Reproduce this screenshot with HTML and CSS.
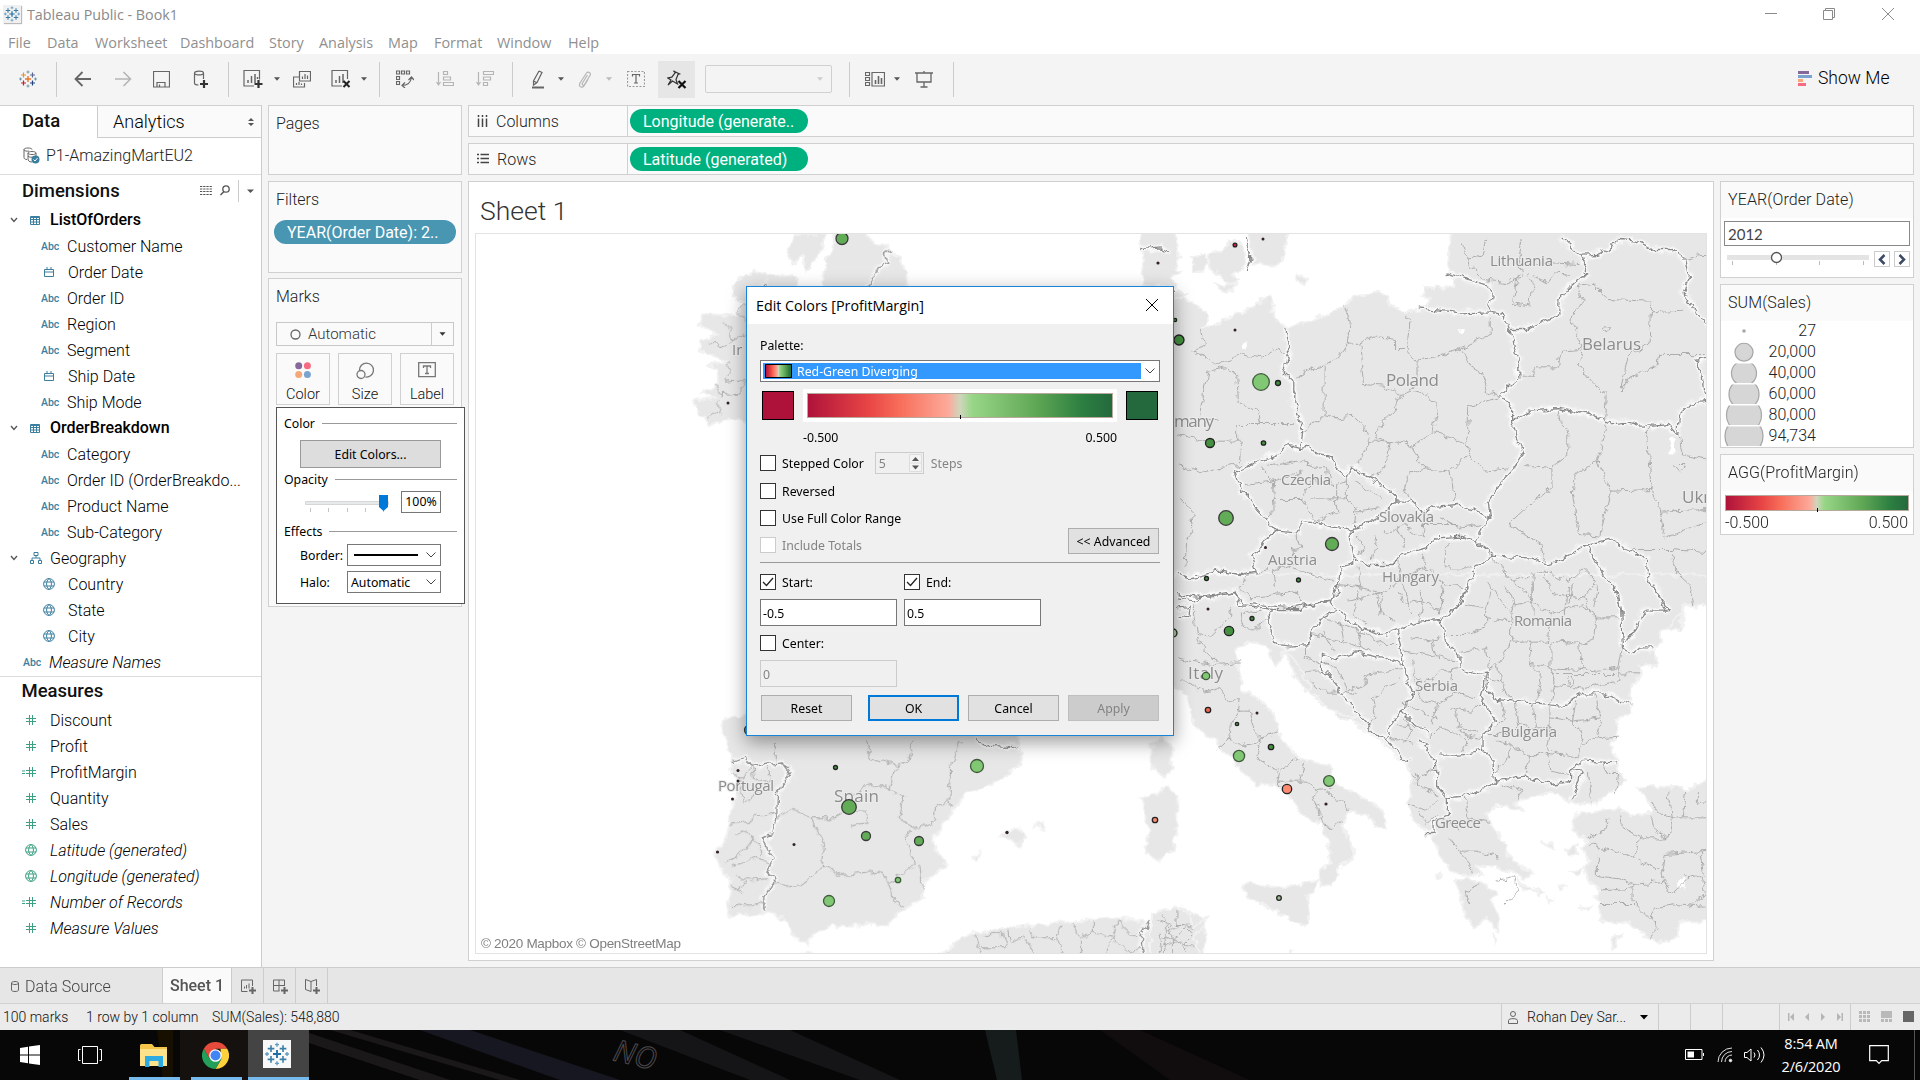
FILE: index.html
```html
<!DOCTYPE html>
<html lang="en">
<head>
<meta charset="utf-8">
<title>Tableau Public - Book1</title>
<link rel="stylesheet" href="styles.css">
</head>
<body>
<svg class="defs" width="0" height="0">
  <defs>
    <symbol id="logo" viewBox="0 0 18 18" fill="none" stroke-width="1.2">
      <path d="M9 6v6M6 9h6" stroke="var(--a)" stroke-width="1.400"/>
      <path d="M4.500 2.500v5M2 5h5" stroke="var(--b)"/><path d="M13.500 2.500v5M11 5h5" stroke="var(--c)"/>
      <path d="M4.500 10.500v5M2 13h5" stroke="var(--d)"/><path d="M13.500 10.500v5M11 13h5" stroke="var(--e)"/>
      <path d="M9 .5v3M7.500 2h3M9 14.500v3M7.500 16h3M1.500 7.500v3M0 9h3M16.500 7.500v3M15 9h3" stroke="var(--f)" stroke-width="1"/>
    </symbol>
    <symbol id="table" viewBox="0 0 10 9"><path d="M.5.5h9v8h-9zM0 1.500h10M.5 3.500h9M.5 6h9M3.500 1v7.500M6.500 1v7.500" fill="none" stroke="#3b7f9f"/></symbol>
    <symbol id="cal" viewBox="0 0 10 10"><path d="M.5 2.500h9v7h-9zM0 5h10M3 0v3M7 0v3" fill="none" stroke="#3b7f9f"/></symbol>
    <symbol id="globe" viewBox="0 0 12 12"><path d="M6 .6a5.400 5.400 0 1 0 0 10.800A5.400 5.400 0 1 0 6 .6M1 4h10M1 8h10M6 .6C2.800 3 2.800 9 6 11.400M6 .6C9.200 3 9.200 9 6 11.400" fill="none" stroke="currentColor"/></symbol>
    <symbol id="hash" viewBox="0 0 10 10"><path d="M3.500 0v10M6.500 0v10M0 3.500h10M0 6.500h10" fill="none" stroke="#3ba182"/></symbol>
    <symbol id="calc" viewBox="0 0 14 10"><path d="M7.500 0v10M10.500 0v10M4 3.500h10M4 6.500h10M0 4h3M0 6.500h3" fill="none" stroke="#3ba182"/></symbol>
    <symbol id="geo" viewBox="0 0 12 12"><path d="M4 .5h4v3H4zM.5 8.500h3v3h-3zM8.500 8.500h3v3h-3zM6 3.500V6M2 8.500V6h8v2.500" fill="none" stroke="#3b7f9f"/></symbol>
    <symbol id="chev" viewBox="0 0 8 6"><path d="M1 1l3 3.500L7 1" fill="none" stroke="#555" stroke-width="1.300"/></symbol>
    <symbol id="car" viewBox="0 0 6 4"><path d="M0 .3h6L3 3.700z" fill="currentColor"/></symbol>
    <linearGradient id="div"><stop offset="0" stop-color="#ae123a"/><stop offset=".2" stop-color="#e84545"/><stop offset=".3" stop-color="#f76d59"/><stop offset=".46" stop-color="#fda999"/><stop offset=".5" stop-color="#cfd6bc"/><stop offset=".54" stop-color="#98d687"/><stop offset=".75" stop-color="#5fa755"/><stop offset=".9" stop-color="#2c7f41"/><stop offset="1" stop-color="#24693d"/></linearGradient>
    <filter id="rough" x="0" y="0" width="100%" height="100%"><feTurbulence type="fractalNoise" baseFrequency=".11" numOctaves="3" seed="4"/><feDisplacementMap in="SourceGraphic" scale="9" xChannelSelector="R" yChannelSelector="G"/></filter>
  </defs>
</svg>

<header class="titlebar">
  <span class="applogo"><svg width="16" height="16"><use href="#logo"/></svg></span>
  <span class="apptitle">Tableau Public - Book1</span>
  <svg class="winbtns" width="140" height="28" fill="none" stroke="#8a8a8a"><path d="M5 13.500h12M63.500 10.500h9v9h-9zM65.500 10V8.500h9v9H73M122 8l12 12M134 8l-12 12"/></svg>
</header>
<nav class="menubar"><span class="m1">File</span><span class="m2">Data</span><span class="m3">Worksheet</span><span class="m4">Dashboard</span><span class="m5">Story</span><span class="m6">Analysis</span><span class="m7">Map</span><span class="m8">Format</span><span class="m9">Window</span><span>Help</span></nav>

<div class="toolbar">
  <span class="tb w56 color"><svg width="18" height="18"><use href="#logo"/></svg></span><i class="sep"></i>
  <span class="tb w40 ml6"><svg width="18" height="16"><path d="M17 8H2M8.500 1L1.500 8l7 7" stroke-width="1.800"/></svg></span>
  <span class="tb w39 dim"><svg width="18" height="16"><path d="M1 8h15M9.500 1l7 7-7 7" stroke-width="1.600"/></svg></span>
  <span class="tb w39"><svg width="17" height="17"><path d="M.5.5h16v15.500H.5zM4 16v-4.500h8V16M6.500 13.500V16"/></svg></span>
  <span class="tb w39"><svg width="16" height="18"><path d="M1.500 3c0-2.500 9-2.500 9 0s-9 2.500-9 0v10c0 1 1.500 2 4 2M10.500 3v6"/><path d="M11 10v8M7 14h8" stroke="#333" stroke-width="2.200"/></svg></span>
  <i class="sep ml8"></i>
  <span class="tb w40 ml4"><svg width="20" height="18"><path d="M16.500 9.500V.5H1v15.500h10"/><path d="M5 13v-3M8.500 13V6M12 13V4M14.500 9V7" stroke-width="1.500"/><path d="M15.500 10v8M11.500 14h8" stroke="#333" stroke-width="2.200"/></svg></span><span class="cr"><svg width="6" height="4"><use href="#car"/></svg></span>
  <span class="tb w41"><svg width="18" height="17"><path d="M6.500.5h11v9.500h-11zM6 6H.5v10h11v-4M9.500 8V5.500M12 8V3M14.500 8V4.500M3.500 14v-2M6 14v-3M8.500 14v-1.500"/></svg></span>
  <span class="tb w38"><svg width="20" height="18"><path d="M16.500 9V.5H1v15.500h10"/><path d="M5 13v-3M8.500 13V6M12 13V4" stroke-width="1.500"/><path d="M12.500 11l6 6M18.500 11l-6 6" stroke="#222" stroke-width="2"/></svg></span><span class="cr"><svg width="6" height="4"><use href="#car"/></svg></span>
  <i class="sep ml11"></i>
  <span class="tb w40 ml5"><svg width="18" height="18"><path d="M.5 1h3v3h-3zM5.500 1h3v3h-3zM10.500 1h3v3h-3zM.5 6.500h3v3h-3zM.5 11.500h3v3h-3zM6 15.500c5 0 8.500-2 9.500-8M9 12.500L6 15.500l3 2.500M12.500 10l3-3 2.500 3"/></svg></span>
  <span class="tb w40 dim"><svg width="18" height="16"><path d="M2.500 1v13M.5 11l2 3 2-3M7.500.5h4v3h-4zM7.500 6h7v3h-7zM7.500 11.500h10v3h-10z"/></svg></span>
  <span class="tb w39 dim"><svg width="18" height="16"><path d="M2.500 1v13M.5 11l2 3 2-3M7.500.5h10v3h-10zM7.500 6h7v3h-7zM7.500 11.500h4v3h-4z"/></svg></span>
  <i class="sep ml8"></i>
  <span class="tb w38 ml6"><svg width="14" height="19"><path d="M8 1l3 1.500-5 10-3.500 2.500v-4L8 1M2.500 11l3 1.500"/><path d="M1 17.500h12" stroke-width="2"/></svg></span><span class="cr"><svg width="6" height="4"><use href="#car"/></svg></span>
  <span class="tb w40 dim"><svg width="14" height="17"><path d="M9.500 4l-5 8c-1 2 1 3 2 1.500l5.500-9C13.500 2 10 0 8.500 2L2 12c-2 4 2 5 4 3l4-6.500"/></svg></span><span class="cr dim"><svg width="6" height="4"><use href="#car"/></svg></span>
  <span class="tb w45"><svg width="18" height="16"><path d="M.5.5h17v15H.5z" stroke-dasharray="2 1.500" stroke="#999"/><path d="M5.500 5.500v-2h7v2M9 3.500V12M7 12h4"/></svg></span>
  <span class="tb pin"><svg width="20" height="19"><path d="M6.500 1l6 3-1.500.5-2 5 1.500 4.500-5-3L1 15l3-5L.8 8l4-.8L8.300 2.500z" stroke="#333"/><path d="M11.500 11l7 7M18.500 11l-7 7" stroke="#111" stroke-width="2.200"/></svg></span>
  <span class="fit"><svg width="6" height="4"><use href="#car"/></svg></span>
  <i class="sep ml17"></i>
  <span class="tb w36 ml7"><svg width="20" height="15"><path d="M.5.5h4v3h-4zM.5 5.500h4v3h-4zM.5 10.500h4v3h-4zM7 .5h12.500v13.500H7z"/><path d="M10.500 12V8M13.500 12V4M16.500 12V6" stroke-width="1.600"/></svg></span><span class="cr"><svg width="6" height="4"><use href="#car"/></svg></span>
  <span class="tb w46"><svg width="18" height="17"><path d="M0 2h18M2 2.500v8.500h14V2.500M9 0v2M9 11v4.500M5.500 16h7" stroke-width="1.300"/></svg></span>
  <i class="sep ml6"></i>
  <span class="showme"><svg width="14" height="15"><path d="M0 0h11v3H0z" fill="#86699b"/><path d="M0 4h14v3H0z" fill="#7ba3cf"/><path d="M0 8h5v3H0z" fill="#f5a77a"/><path d="M0 12h8v3H0z" fill="#f76b82"/></svg>Show Me</span>
</div>

<main class="work">
  <aside class="datapane">
    <div class="tabs"><b>Data</b><span>Analytics<svg width="6" height="8"><path d="M0 3l3-3 3 3zM0 5l3 3 3-3z" fill="#555"/></svg></span></div>
    <div class="source"><svg width="17" height="17" fill="none" stroke="#666"><path d="M1 2.500c0-2 8-2 8 0M1 2.500v8c0 1 1 2 3 2M1 2.500C1 4 4 4.500 6 4M5 6c0-2 8-2 8 0s-8 2-8 0v6c0 1.500 1 3 4 3M13 6v3M5 9c1 1.500 4 1.500 6 1"/><circle cx="12.500" cy="12.500" r="4" fill="#3b7f9f" stroke="none"/><path d="M10.500 12.500l1.500 1.500 2.500-3" stroke="#fff"/></svg>P1-AmazingMartEU2</div>
    <div class="head">Dimensions<svg width="56" height="22"><path d="M0 6.500h12M0 9h12M0 11.500h12M0 14.500h12" stroke="#555" stroke-dasharray="2.300 .9"/><circle cx="26" cy="9" r="3.200" fill="none" stroke="#555" stroke-width="1.300"/><path d="M24 11.500L20.500 15" stroke="#555" stroke-width="1.500"/><path d="M38.500 0v22" stroke="#ccc"/><path d="M47 9.500h7L50.500 13z" fill="#555"/></svg></div>
    <ul class="fields">
      <li class="grp b"><svg class="cv" width="8" height="6"><use href="#chev"/></svg><svg width="10" height="9"><use href="#table"/></svg><span>ListOfOrders</span></li>
      <li><em>Abc</em><span>Customer Name</span></li>
      <li><svg width="10" height="10"><use href="#cal"/></svg><span>Order Date</span></li>
      <li><em>Abc</em><span>Order ID</span></li>
      <li><em>Abc</em><span>Region</span></li>
      <li><em>Abc</em><span>Segment</span></li>
      <li><svg width="10" height="10"><use href="#cal"/></svg><span>Ship Date</span></li>
      <li><em>Abc</em><span>Ship Mode</span></li>
      <li class="grp b"><svg class="cv" width="8" height="6"><use href="#chev"/></svg><svg width="10" height="9"><use href="#table"/></svg><span>OrderBreakdown</span></li>
      <li><em>Abc</em><span>Category</span></li>
      <li><em>Abc</em><span>Order ID (OrderBreakdo...</span></li>
      <li><em>Abc</em><span>Product Name</span></li>
      <li><em>Abc</em><span>Sub-Category</span></li>
      <li class="grp"><svg class="cv" width="8" height="6"><use href="#chev"/></svg><svg width="12" height="12"><use href="#geo"/></svg><span>Geography</span></li>
      <li><svg width="12" height="12"><use href="#globe"/></svg><span>Country</span></li>
      <li><svg width="12" height="12"><use href="#globe"/></svg><span>State</span></li>
      <li><svg width="12" height="12"><use href="#globe"/></svg><span>City</span></li>
      <li class="top it"><em>Abc</em><span>Measure Names</span></li>
    </ul>
    <div class="head measures">Measures</div>
    <ul class="fields green">
      <li class="top"><svg width="10" height="10"><use href="#hash"/></svg><span>Discount</span></li>
      <li class="top"><svg width="10" height="10"><use href="#hash"/></svg><span>Profit</span></li>
      <li class="top"><svg class="eq" width="14" height="10"><use href="#calc"/></svg><span>ProfitMargin</span></li>
      <li class="top"><svg width="10" height="10"><use href="#hash"/></svg><span>Quantity</span></li>
      <li class="top"><svg width="10" height="10"><use href="#hash"/></svg><span>Sales</span></li>
      <li class="top it"><svg width="12" height="12"><use href="#globe"/></svg><span>Latitude (generated)</span></li>
      <li class="top it"><svg width="12" height="12"><use href="#globe"/></svg><span>Longitude (generated)</span></li>
      <li class="top it"><svg class="eq" width="14" height="10"><use href="#calc"/></svg><span>Number of Records</span></li>
      <li class="top it"><svg width="10" height="10"><use href="#hash"/></svg><span>Measure Values</span></li>
    </ul>
  </aside>

  <section class="cards">
    <div class="card pages"><h3>Pages</h3></div>
    <div class="card filters"><h3>Filters</h3><span class="pill blue">YEAR(Order Date): 2..</span></div>
    <div class="card marks"><h3>Marks</h3>
      <div class="marktype"><svg width="11" height="11"><circle cx="5.500" cy="5.500" r="4.500" fill="none" stroke="#666" stroke-width="1.300"/></svg><span>Automatic</span><i><svg width="7" height="4"><use href="#car"/></svg></i></div>
      <div class="markbtns">
        <span><svg width="16" height="16"><circle cx="3.700" cy="3.700" r="3.500" fill="#86699b"/><circle cx="12.400" cy="3.700" r="3.500" fill="#f76b82"/><circle cx="3.700" cy="12.400" r="3.500" fill="#f5a77a"/><circle cx="12.400" cy="12.400" r="3.500" fill="#7ba3cf"/></svg>Color</span>
        <span><svg width="18" height="18" fill="none" stroke="#777" stroke-width="1.300"><path d="M3.500 8.500a7 7 0 1 1 6 6.500"/><circle cx="5" cy="12.500" r="4"/></svg>Size</span>
        <span><svg width="18" height="16" fill="none" stroke="#777" stroke-width="1.300"><path d="M.7.7h16.600v14H.7zM5.500 6V4h7v2M9 4v7.500M7 11.500h4"/></svg>Label</span>
      </div>
      <div class="popup">
        <div class="grptitle">Color<hr></div>
        <button class="editcolors">Edit Colors...</button>
        <div class="grptitle op">Opacity<hr></div>
        <div class="oprow"><svg width="86" height="22"><path d="M.5 6.500h83v3H.5z" fill="#e7eaea" stroke="#d6d6d6"/><path d="M5.500 13v4M23.500 13v4M42.500 13v4M60.500 13v4M78.500 13v4" stroke="#c4c4c4"/><path d="M74 0h9v12l-4.500 4L74 12z" fill="#0078d7"/></svg><span class="pct">100%</span></div>
        <div class="grptitle ef">Effects<hr></div>
        <div class="effrow"><label>Border:</label><span class="combo"><b></b><svg width="10" height="6"><path d="M.5.5L5 5l4.500-4.500" fill="none" stroke="#444"/></svg></span></div>
        <div class="effrow"><label>Halo:</label><span class="combo">Automatic<svg width="10" height="6"><path d="M.5.5L5 5l4.500-4.500" fill="none" stroke="#444"/></svg></span></div>
      </div>
    </div>
  </section>

  <section class="stage">
    <div class="shelf"><span class="sl"><svg width="11" height="13"><path d="M1.500 0v2M5.500 0v2M9.500 0v2M1.500 3.500V12M5.500 3.500V12M9.500 3.500V12" stroke="#444" stroke-width="1.500"/></svg>Columns</span><span class="pill">Longitude (generate..</span></div>
    <div class="shelf"><span class="sl"><svg width="12" height="12"><path d="M0 1.500h2M3.500 1.500H12M0 5.500h2M3.500 5.500H12M0 9.500h2M3.500 9.500H12" stroke="#444" stroke-width="1.500"/></svg>Rows</span><span class="pill">Latitude (generated)</span></div>
    <div class="lower">
      <div class="view">
        <h1>Sheet 1</h1>
        <svg class="map" width="1232" height="721" viewBox="475 233 1232 721">
          <rect x="475" y="233" width="1232" height="721" fill="#fff"/>
          <g filter="url(#rough)">
            <g class="land">
              <g transform="translate(474.500 234.500) scale(.4591 .33333)">
                <path d="M785 -20L775 60 760 100 755 140 780 190H945L940 120 925 70 905 40 860 15 840 -20ZM700 0L765 0 745 80 722 110 715 60 695 90 680 55ZM565 150L605 110 650 125 700 125 705 190 600 200V565L555 555 510 575 500 550 475 515 475 500 525 490 495 475 530 450 530 400 510 390 545 380 490 350 495 320 530 300 485 270 500 240 545 245 575 240 590 200 560 190Z"/>
              </g>
              <g transform="translate(474.500 604.500) scale(.4591 .33333)">
                <path d="M600 300L590 330 540 345 535 370 545 400 560 450 555 500 575 530 565 600 550 690 525 750 540 800 560 820 550 935 590 930 610 930 640 920 680 950 690 990 725 1022 740 985 780 965 900 960 930 920 980 880 975 840 1010 800 1028 775 1005 740 1000 700 1045 610 1070 570 1130 535 1185 490 1190 440 1180 380Z"/>
                <path d="M1500 400L1520 430 1518 490 1500 525 1475 480 1470 430 1490 405ZM1505 545L1530 580 1530 660 1520 740 1490 765 1460 745 1470 680 1450 580 1490 570ZM1145 695L1180 670 1200 690 1185 725ZM1085 760L1102 745 1095 768ZM1218 660L1238 658 1243 675ZM970 1070L1020 1045 1080 985 1200 965 1290 950 1380 940 1440 945 1470 960 1500 915 1540 910 1590 940V1070ZM705 1070L715 1045 735 1045 738 1070Z"/>
              </g>
              <g transform="translate(1154.500 234.500) scale(.35714 .33333)">
                <path d="M66 185L95 200 120 215 140 230 150 245 135 275 165 275 200 255 240 235 270 222 300 195 325 185 335 210 325 235 345 262 375 280 440 255 500 235 530 210 570 180 620 175 648 178 660 215 700 232 740 225 750 215 775 195 750 185 752 158 835 163 838 115 825 110 830 -20H1590V1110L1480 1118 1475 1190H40V185Z"/>
                <path d="M-39 -20L55 -20 70 60 60 90 75 110 50 130 60 165 90 180 40 200 -30 200ZM105 70L140 60 150 85 135 115 110 110ZM150 60L190 50 215 15 240 35 255 60 255 90 220 120 240 140 205 150 180 120 155 100ZM175 150L230 150 215 172 190 170ZM265 -20L270 50 268 90 310 90 345 95 365 60 370 -20ZM400 120L425 128 420 150 400 140Z"/>
              </g>
              <g transform="translate(1154.500 584.500) scale(.35714 .33333)">
                <path d="M40 -30H1590V60L1480 62 1475 90 1440 130 1410 150 1420 165 1400 190 1405 245 1355 240 1365 270 1335 310 1335 385 1290 405 1300 440 1275 480 1300 530 1300 565 1320 585 1300 605 1270 625 1225 665 1195 655 1160 655 1130 630 1095 625 1050 640 1010 655 1035 680 1000 670 960 665 930 690 950 730 975 770 990 810 1030 850 1060 870 1040 885 1015 870 960 850 900 845 920 870 880 875 830 860 800 810 780 760 735 720 710 655 720 600 715 560 700 530 650 490 600 440 540 400 490 375 440 330 410 290 380 230 360 200 340 250 320 200 290 170 240 185 225 200 240 290 245 320 290 340 330 380 350 450 400 520 490 545 500 590 570 630 640 680 650 735 620 725 600 690 545 680 525 730 550 780 560 815 520 845 495 905 465 910 465 860 495 830 470 720 410 690 390 650 340 600 290 600 250 570 190 490 140 450 115 430 100 370 80 320 40 300Z"/>
                <path d="M1590 570V1010H1470L1465 1060 1410 1072 1375 1055 1330 1020 1260 1010 1240 985 1250 955 1235 940 1250 920 1215 890 1200 850 1220 830 1200 790 1215 770 1170 740 1180 690 1250 680 1300 670 1330 690 1390 685 1380 640 1350 605 1400 605 1500 615 1540 590ZM840 890L870 880 920 895 960 930 940 945 965 1000 960 1040 930 1000 895 1030 865 990 860 930ZM250 905L270 895 310 910 400 900 460 885 430 940 435 990 420 1025 370 1000 310 965 255 935ZM-10 985L60 970 100 990 105 1030 150 995 130 1035 110 1060 140 1130H-10Z"/>
                <path d="M1085 775L1115 780 1112 795ZM1155 790L1185 785 1180 815 1160 810ZM1165 860L1195 850 1190 870ZM1070 910L1090 930 1075 932ZM1100 940L1115 945 1105 955ZM1280 1060L1308 1050 1285 1095ZM950 1050L958 1060 953 1072ZM795 860L805 880 795 885ZM1130 905L1150 900 1140 915ZM1010 880L1070 920 1040 915ZM1190 970L1225 965 1210 978ZM370 1092L385 1098 380 1104ZM365 195L400 240 440 310 425 320 385 260ZM490 375L560 400 540 412Z"/>
              </g>
            </g>
            <g class="lakes"><ellipse cx="1461" cy="332" rx="3" ry="2"/><ellipse cx="1244" cy="346" rx="3" ry="3"/><ellipse cx="1672" cy="446" rx="3" ry="9"/><ellipse cx="1681" cy="883" rx="4" ry="6"/></g>
            <g class="halo">
              <g transform="translate(474.500 234.500) scale(.4591 .33333)"><path d="M910 45L895 60 900 90 880 100 870 130 855 155M625 170L635 145"/></g>
              <g transform="translate(474.500 604.500) scale(.4591 .33333)"><path d="M560 475L590 460 600 485 670 475 690 510 660 560 658 640 650 690 625 700 650 760 635 800 655 830 630 880 630 915M1090 405L1120 425 1185 430M1470 950L1450 1000 1460 1070"/></g>
              <g transform="translate(1154.500 234.500) scale(.35714 .33333)"><path d="M820 115L865 130 910 145 940 155 945 185 935 225M740 220L860 235 940 232 975 240 995 285 1020 385 1020 430 970 480 1000 520 1000 570 1030 660 1000 710 960 760 935 800 940 850M1140 10L1195 60 1210 115 1165 155 1135 195 1135 240 1080 265 1040 285 995 285M1195 62L1240 60 1270 45 1300 15 1350 20 1400 45 1450 45 1485 75 1495 130 1480 175 1520 240 1557 270M1000 560L1050 530 1130 522 1220 540 1280 565 1320 560 1360 575 1400 575 1440 570 1465 600 1470 540 1500 505 1557 500M1545 500L1535 420 1515 380 1557 370M365 285L378 350 360 410 390 440 390 500 400 540 415 590 410 640M225 710L290 680 350 655 375 630 410 640 430 635 460 660 500 670 510 700 540 725 550 695 600 730 660 770 680 800 625 850 580 875 540 885 500 878 470 870 415 860 400 895 340 890 300 840 245 770 225 710M680 800L720 800 750 830 790 815 850 810 900 830 940 850 925 870 900 920 860 905 790 910 760 940 690 960 670 990 600 990 555 960 545 900 555 880M900 920L950 965 1050 970 1095 990 1150 970 1210 930 1270 915 1340 950 1380 980 1385 1040 1420 1090 1440 1130M1210 930L1250 1010 1300 1080 1310 1140M950 965L900 1000 870 1070 830 1140M340 890L310 910 300 940 270 960 285 1010 240 1020 180 1010 100 1030 66 1020M555 960L555 990 520 1000 515 1050 490 1100 450 1110 380 1120 250 1105 225 1075 140 1090 66 1080M258 10L270 70 260 110M-40 45L20 40 40 55M-40 160L60 168"/></g>
              <g transform="translate(1154.500 584.500) scale(.35714 .33333)"><path d="M66 40L110 50 150 35 225 20 240 60 330 75 410 75 440 60 490 50 520 20 515 0M66 70L100 65 95 100 66 95M330 75L315 100 340 180 380 185 435 180 440 150 465 105 510 80 490 50M510 80L580 130 640 150 680 135 740 110 800 105 855 60 880 0M680 135L690 190 700 240 650 220 560 205 510 225 470 210 470 250 520 320 570 390 610 440 650 470M800 108L815 170 855 210 855 250 900 270 935 265 930 310 955 345 1060 355 1140 365 1200 325 1260 325 1300 350 1335 358M700 240L710 300 725 330 690 380 740 430 770 450M930 265L915 340 955 410 920 450 920 500 950 530 955 590 940 605 870 635 820 640 790 600 790 540 760 480 735 470M690 380L655 430 650 470 710 530M820 640L820 690 780 710 780 750 755 750M955 590L1040 575 1110 600 1165 590 1165 555 1200 560 1180 620 1165 650M1165 555L1200 530 1295 535M795 515L840 515 920 500M1280 0L1305 60 1310 190 1340 205 1360 190 1400 190M1400 0L1430 80 1370 80 1350 130 1315 180"/></g>
            </g>
            <g class="reg">
              <g transform="translate(474.500 234.500) scale(.4591 .33333)"><path d="M540 260L555 280 560 315 600 300M510 325L550 335 565 315M550 385L560 410 545 440 590 435M525 450L535 480 580 475 590 440M530 500L535 530 505 550M600 190L575 230 600 265"/></g>
              <g transform="translate(474.500 604.500) scale(.4591 .33333)"><path d="M555 510L590 515 605 480M605 485L610 520 640 530 640 490M655 475L655 410M580 520L585 600 620 560M555 660L600 650 610 630 655 630M570 690L590 680 610 700 580 750 545 770M600 690L620 720 625 760M560 790L600 760 640 775M570 810L600 830 635 820M560 850L580 860 590 830M560 900L600 905 630 890M660 640L690 615 735 640 760 720 755 790 720 830 700 850 655 835M735 640L785 640 815 600 830 560 865 540 905 555 935 580 925 640 970 675 1000 650 1005 600 1030 590 1045 605M905 555L920 480 860 460 855 410M920 480L945 470 955 410M1060 410L1040 480 1035 590M785 640L810 620 850 620 855 655 820 665M755 785L800 810 885 800 900 840 960 780 940 700 950 680M900 840L915 890 935 905M970 780L975 850M1090 990L1105 1050M1110 990L1150 990 1160 1030 1105 1030M1160 970L1165 1010 1200 1000 1220 1050M1210 970L1220 1000 1270 1000 1280 960M1270 1000L1280 1050M1300 950L1320 1000 1350 980 1350 945M1320 1000L1320 1060M1350 980L1390 1000 1400 950M1390 1000L1370 1060M1400 950L1430 990 1450 1000M1390 1000L1420 1040 1460 1030M1030 1040L1060 1060M1500 930L1510 980 1540 960 1568 970M1510 980L1500 1060M1500 1020L1540 1010 1568 1030"/></g>
              <g transform="translate(1154.500 234.500) scale(.35714 .33333)"><path d="M530 210L545 260 540 330 575 325 620 305 675 315 675 345 705 345 735 380 735 430 715 470 690 480 640 455 585 450 575 330M705 240L715 270 705 340M735 380L790 370 860 340 940 300 940 250M865 345L880 390 910 410 930 470 970 485M540 330L515 370 480 390 440 400 400 430M475 395L475 540 510 550 560 545 590 580 600 620 565 690M475 540L450 565 415 590M690 480L670 530 640 560 625 610 660 620 720 635 780 595 785 570 795 520 770 480 715 470M785 595L870 625M970 485L880 520 875 630 880 660 925 710 985 700M600 615L660 620 650 700 600 730M725 635L740 680 760 700 830 710 880 660M830 710L840 800M760 700L710 720 700 760 720 800M860 25L880 70 920 65 930 10M880 70L885 95 920 135 990 145 1030 130 1020 70 1030 10M1020 120L1005 205 1050 215 1060 150 1050 120M1070 90L1110 85 1190 90M1165 120L1120 115 1100 145 1060 120M1180 155L1230 150 1270 195 1390 200 1385 320 1325 370 1305 470M1180 155L1200 200 1165 250 1185 300 1200 345 1140 350 1130 400 1065 400 1060 425 1025 425M1390 235L1480 230M1305 470L1330 430 1410 390 1415 360 1535 360M1200 350L1185 390 1240 460 1265 480 1260 560M1480 75L1530 60 1557 60M150 410L200 400 230 420 235 500 290 530 300 570 390 570M150 410L130 515 125 550 180 560M180 390L240 360 300 370 340 340 370 360M110 350L180 390M130 280L140 330 110 350M230 620L230 570 300 570M66 600L150 620 240 620 235 680M66 690L130 715 180 700 240 690M70 790L100 820 110 880 90 920 85 1000M320 695L400 680 480 700 490 745M250 750L330 740 335 830 310 860M300 700L330 740 420 710M335 795L410 795 440 740 500 750M410 795L450 860 510 830 510 750 540 740M440 790L540 790M540 725L540 800 565 820 560 870M565 740L600 770 640 790M565 830L630 820M400 900L410 940 385 945 390 990 330 1010 340 1060M320 1005L260 1020 240 1060 270 1090 400 1070 415 1110M390 1000L500 1040M570 900L590 950 570 960M620 900L610 980M640 900L700 870 750 910 760 850M750 870L850 870M800 850L860 880 920 870M680 870L700 930M1030 690L1110 700 1160 660 1160 600 1135 560 1130 520M1110 700L1110 760 1060 800 990 870M1240 680L1270 570M1240 680L1175 720 1170 780 1190 900 1250 905 1255 870 1280 770 1240 680M1380 580L1390 760 1410 820 1430 910 1557 860M1280 770L1390 765M1410 830L1557 825M1465 600L1480 660 1557 680M1460 690L1485 690 1470 715 1450 690M1340 945L1450 945 1557 955M1450 960L1460 1010 1500 1050 1510 1110M990 870L1080 930 1095 985M950 970L1000 1040 1060 1090M1000 1040L1090 1010 1160 1040 1200 1000M1060 1010L1060 1140M930 1040L1000 1140M1090 1010L1110 1080 1200 1090M1200 1000L1240 1040 1200 1090 1220 1140M1160 1060L1150 1140M570 1000L580 1060 520 1050M680 970L690 1030 640 1080 570 1060M690 1030L760 1000 750 960M760 1000L810 1050 870 1060M690 1030L720 1140M810 1050L800 1140M820 920L810 1000 890 1000M640 1080L630 1140M540 1100L640 1080M1255 280L1278 280 1270 296 1255 290Z"/></g>
              <g transform="translate(1154.500 584.500) scale(.35714 .33333)"><path d="M110 60L120 150 160 155 210 100 215 60M120 155L140 200 175 230M66 220L100 230 165 240 240 235M66 280L140 320 180 310 200 350 240 340M240 90L250 130 290 130 310 100M250 90L300 80M240 340L235 380 265 380 280 440 300 460 260 485 210 470 215 420 240 380M210 460L180 490M300 460L345 445M300 465L285 520 350 560 345 590 425 590 455 615 500 610M350 555L400 520M420 535L410 590M345 590L355 610M455 615L445 640 470 720 500 730 510 710 530 710M485 620L510 650 530 650 540 680M470 100L560 130 640 180 680 180M440 150L530 170 600 200M470 140L500 200M520 110L530 170M580 130L570 195M420 180L420 220 470 240M440 290L470 320 520 320M420 260L470 260M470 230L520 260 540 320 590 300 590 270 650 260 690 245M690 280L610 340 620 400 600 430M520 320L560 330M570 20L560 100 600 120M620 30L640 90 680 110M680 20L700 60 750 50 740 110M750 20L750 50 800 80M810 20L800 70M720 160L780 170 790 230M700 200L760 210 850 230M720 220L725 280 780 290 800 260 855 250M780 170L800 160M730 290L750 350 790 360 840 330 830 260M790 360L780 420M840 330L900 340M830 370L890 380 920 350M840 370L850 430 900 440M690 350L740 380 790 400M680 420L760 430M700 390L720 440 700 480M660 460L720 480M855 420L870 450 920 460M770 455L795 430 840 440 875 475 860 500M880 460L860 440M870 60L930 70 940 20M930 70L930 130 870 150 820 150M930 100L1000 110 1010 60 980 0M1000 110L1000 170 1100 170 1110 90 1060 50 1010 60M860 200L930 190 935 255 960 230M1000 170L960 240 970 290 1000 350M1060 170L1050 240 1080 270 1070 350M1050 240L1110 250 1110 170M1110 250L1200 255 1190 180 1110 170M1190 180L1230 170 1240 100 1190 60 1110 90M1240 100L1300 100M1200 255L1240 260 1300 250 1310 190M1110 250L1120 300 1110 360M1120 300L1200 310 1300 290 1300 250M1110 270L1200 270 1290 270M1300 265L1360 265M1160 60L1170 0M1230 70L1240 0M1060 50L1060 0M970 290L920 280M1150 290L1165 280 1178 290 1165 303ZM970 350L980 400 950 430M1010 350L1020 420 990 450 930 450M1060 360L1070 430 1020 420M1110 365L1110 430 1070 430M1180 350L1170 410 1110 400M1230 330L1250 400 1170 410M1110 430L1100 500 1050 520 1000 480M1170 410L1200 460 1180 520 1100 500M1250 400L1240 460 1300 455M1240 460L1200 480M1050 520L1040 575M960 470L1000 480 980 540 955 560M1100 500L1110 560 1160 570M1260 530L1270 570 1300 570M1215 560L1225 660M1300 570L1290 625M970 600L1030 620 1020 650M870 640L880 700 940 710M825 700L850 740M800 640L740 600 720 570M740 600L730 560M790 560L740 570M710 655L760 680 790 650M740 680L760 720 790 690M830 760L850 800 900 800 960 815M850 800L885 840 890 870M880 960L870 920 910 900M960 890L1000 880 1020 920 980 960M1220 780L1250 790 1300 800 1340 820 1360 760 1440 760 1450 700M1240 820L1240 870 1300 880 1340 900 1340 950 1390 1005 1400 970 1460 960 1557 970M1340 820L1420 860 1430 890 1340 900M1420 860L1430 810 1557 800M1250 920L1340 910M1250 960L1340 960M1305 690L1310 730 1360 760M1390 690L1400 740 1440 760M1390 660L1450 700 1557 700M1440 620L1450 700M1490 620L1480 700M1520 620L1520 660 1557 650M1430 890L1450 930 1500 880 1530 870 1540 930 1500 970M1500 880L1480 870M1390 1005L1410 1030 1380 1060M1210 760L1260 740 1270 700M1530 800L1540 870M10 1010L40 1020 50 1060 20 1060M60 980L60 1020 90 1020M50 1060L90 1030 110 1050 80 1080 50 1060 50 1120M80 1080L95 1120M10 1050L20 1120"/></g>
            </g>
          </g>
          <g class="names">
            <text x="1490" y="266" textLength="63">Lithuania</text><text class="lg" x="1582" y="350" textLength="59">Belarus</text><text class="lg" x="1386" y="386" textLength="53">Poland</text>
            <text x="1281" y="485" textLength="50">Czechia</text><text x="1379" y="522" textLength="55">Slovakia</text><text x="1268" y="565" textLength="49">Austria</text><text x="1382" y="582" textLength="57">Hungary</text><text class="lg" x="1682" y="503">Ukr</text>
            <text class="lg" x="1174" y="427" textLength="40">many</text><text x="732" y="355">Ir</text><text class="lg" x="1188" y="679" textLength="35">Italy</text>
            <text x="1514" y="626" textLength="58">Romania</text><text x="1415" y="691" textLength="43">Serbia</text><text x="1501" y="737" textLength="56">Bulgaria</text><text x="1435" y="828" textLength="46">Greece</text>
            <text x="718" y="791" textLength="56">Portugal</text><text class="lg" x="834" y="802" textLength="45">Spain</text>
          </g>
          <g class="marksg" stroke="#222">
            <g fill="#62ab57" stroke="#3a3a3a"><circle cx="842" cy="238.500" r="6"/><circle cx="1226" cy="518" r="7.300"/><circle cx="1332" cy="544" r="6.500"/><circle cx="849" cy="807" r="7.300"/><circle cx="866" cy="836" r="4.500"/><circle cx="919" cy="841" r="4.500"/><circle cx="749" cy="730" r="4.500"/></g>
            <g fill="#80c873" stroke="#3f5a3b"><circle cx="1261" cy="382" r="8.300"/><circle cx="977" cy="766" r="6.500"/><circle cx="829" cy="901" r="5.500"/><circle cx="898" cy="880" r="2.700"/><circle cx="1206" cy="676" r="3.700"/><circle cx="1239" cy="756" r="5.600"/><circle cx="1329" cy="781" r="5.400"/></g>
            <g fill="#43903f"><circle cx="1179" cy="340" r="5"/><circle cx="1175" cy="320" r="1.700"/><circle cx="1278" cy="383" r="2.500"/><circle cx="1210" cy="443" r="4.500"/><circle cx="1263.500" cy="443" r="2.200"/><circle cx="1229" cy="631" r="4.700"/><circle cx="1252" cy="618.500" r="2"/><circle cx="1206.500" cy="578.500" r="2"/><circle cx="1298.500" cy="580" r="2"/><circle cx="835.500" cy="767.500" r="2"/><circle cx="1271" cy="747" r="2.700"/><circle cx="1237" cy="724" r="1.700"/><circle cx="1279" cy="898" r="2.300" fill="#9cbd90"/><circle cx="1173" cy="633" r="4" fill="#aac9a0"/></g>
            <g fill="#fb8a70"><circle cx="1287" cy="789" r="4.700"/><circle cx="1155" cy="820" r="2.700"/><circle cx="1208" cy="710" r="2.700" fill="#f2654f"/><circle cx="1235" cy="245" r="1.900" fill="#c21f3c"/></g>
            <g fill="#302226" stroke="none"><circle cx="1158" cy="263" r="1.600"/><circle cx="1263" cy="239" r="1.500"/><circle cx="1235" cy="330" r="1.500"/><circle cx="728" cy="403" r="1.500"/><circle cx="738" cy="770.500" r="1.500"/><circle cx="738" cy="781" r="1.500"/><circle cx="732.500" cy="799" r="1.500"/><circle cx="717.500" cy="852" r="1.600"/><circle cx="794" cy="844.500" r="1.500"/><circle cx="1007" cy="832.500" r="1.700"/><circle cx="1265.500" cy="547.500" r="1.500"/><circle cx="1208" cy="609" r="1.500"/><circle cx="1257" cy="713" r="1.500"/><circle cx="1326" cy="804" r="1.600"/></g>
          </g>
          <text class="attr" x="481" y="948" textLength="200">© 2020 Mapbox © OpenStreetMap</text>
        </svg>
      </div>
      <div class="legends">
        <div class="leg l1"><h3>YEAR(Order Date)</h3><div class="yr">2012</div>
          <div class="slide"><svg width="142" height="16"><path d="M0 4h142v5H0z" fill="#e4e4e4"/><path d="M5.500 10v4M49.500 10v4M92.500 10v4M136.500 10v4" stroke="#bbb"/><circle cx="49.500" cy="6.500" r="5" fill="#fff" stroke="#555" stroke-width="1.300"/></svg><i><svg width="8" height="11"><path d="M6.500 1L2 5.500l4.500 4.500"/></svg></i><i><svg width="8" height="11"><path d="M1.500 1L6 5.500 1.500 10"/></svg></i></div></div>
        <div class="leg l2"><h3>SUM(Sales)</h3>
          <svg class="bubbles" width="40" height="126" fill="#d6d6d6" stroke="#a9a9a9">
            <circle cx="20" cy="10" r="1.800" fill="#a9a9a9" stroke="none"/>
            <svg y="21.500" width="40" height="19.500"><circle cx="20" cy="9.700" r="9"/></svg>
            <svg y="42.500" width="40" height="19.500"><circle cx="20" cy="9.700" r="12.500"/></svg>
            <svg y="63.500" width="40" height="19.500"><circle cx="20" cy="9.700" r="15"/></svg>
            <svg y="84.500" width="40" height="19.500"><circle cx="20" cy="9.700" r="17.500"/></svg>
            <svg y="105.500" width="40" height="19.500"><circle cx="20" cy="9.700" r="19"/></svg>
          </svg>
          <div class="nums"><span>27</span><span>20,000</span><span>40,000</span><span>60,000</span><span>80,000</span><span>94,734</span></div></div>
        <div class="leg l3"><h3>AGG(ProfitMargin)</h3><svg class="grad" width="184" height="17"><rect x=".5" y=".5" width="183" height="15" fill="url(#div)" stroke="#b9a99c"/><path d="M92.500 13v4" stroke="#000"/></svg><div class="ends"><span>-0.500</span><span>0.500</span></div></div>
      </div>
    </div>
  </section>
</main>

<div class="sheettabs"><span class="ds"><svg width="8" height="11" fill="none" stroke="#666"><path d="M.5 2c0-2 7-2 7 0s-7 2-7 0v7c0 2 7 2 7 0V2"/></svg>Data Source</span><b>Sheet 1</b>
  <span class="nt"><svg width="16" height="16"><path d="M11.500 7V1H.5v11.500h6M3.500 9.500v-2M5.500 9.500V6M8 9.500V4.500"/><path d="M11.500 8v7M8 11.500h7" stroke-width="2"/></svg></span>
  <span class="nt"><svg width="16" height="16"><path d="M11.500 7V1H.5v11h6M6 1v11M.5 6.500h11"/><path d="M11.500 8v7M8 11.500h7" stroke-width="2"/></svg></span>
  <span class="nt"><svg width="16" height="16"><path d="M6 2.500L.5.5v10L6 12.500zM6 2.500L11.500.5V7"/><path d="M11.500 8v7M8 11.500h7" stroke-width="2"/></svg></span></div>
<footer class="status"><span class="s1">100 marks</span><span class="s2">1 row by 1 column</span><span>SUM(Sales): 548,880</span>
  <div class="user"><svg width="10" height="13" fill="none" stroke="#666"><circle cx="5" cy="3" r="2.500"/><path d="M.5 12.500V9.500C.5 7 9.500 7 9.500 9.500v3z"/></svg>Rohan Dey Sar...<svg class="uc" width="8" height="5"><path d="M0 0h8L4 4.500z"/></svg></div>
  <i class="c32"></i><i class="c32"></i><i class="c57"></i>
  <div class="nav"><svg width="55" height="8" fill="#b5b5b5"><path d="M0 0h1.500v8H0zM6 0v8L2 4zM21 0v8l-4-4zM33 0l4 4-4 4zM49 0l4 4-4 4zM53.500 0H55v8h-1.500z"/></svg></div>
  <div class="views"><svg width="56" height="12" fill="#b9b9b9"><path d="M0 0h3v3H0zM4 0h3v3H4zM8 0h3v3H8zM0 4h3v3H0zM4 4h3v3H4zM8 4h3v3H8zM0 8h3v3H0zM4 8h3v3H4zM8 8h3v3H8zM22 0h11v7H22zM22 8h3v3h-3zM26 8h3v3h-3zM30 8h3v3h-3z"/><path d="M44 0h11v11H44z" fill="#666"/></svg></div>
</footer>

<div class="taskbar">
  <svg class="wall" width="1920" height="50"><path d="M420 0L560 50H620L470 0z" fill="#171722"/><path d="M620 0L750 50H790L680 0zM720 0L860 50H900L790 0z" fill="#151517"/><path d="M270 0L420 50H450L300 0zM330 0L500 50H520L350 0z" fill="#1b1819"/><path d="M985 0l12 50h25l-6-50z" fill="#161b1c"/><path d="M1100 0l70 50h80L1140 0z" fill="#110c0d"/><path d="M157 0h16v50h-10z" fill="#171000"/><path d="M180 0h68v50h-68z" fill="#15110f"/><text x="612" y="30" transform="rotate(14 612 30)">NO</text></svg>
  <span class="t win"><svg width="20" height="20" fill="#fff"><path d="M0 3l8-1.200V9.500H0zM9 1.600L20 0v9.500H9zM0 10.500h8v7.700L0 17zM9 10.500h11V20L9 18.400z"/></svg></span>
  <span class="t tv"><svg width="24" height="18" fill="none" stroke="#fff"><path d="M4.500.5h15v17h-15zM2.500 3.500h-2v11h2M21.500 3.500h2v11h-2"/></svg></span>
  <span class="t open ex"><svg width="27" height="23"><path d="M0 1.500Q0 0 1.500 0H12l2.500 3H27v18H0z" fill="#f5c54a"/><path d="M0 5h27v17H0z" fill="#fde28c"/><path d="M5 12h18v11h-4.500v-6h-9v6H5z" fill="#2cabe2"/></svg></span>
  <span class="t open ch"><svg width="27" height="27" viewBox="-13.500 -13.500 27 27"><path d="M-11.700-6.750A13.500 13.500 0 0 1 11.700-6.750H0L-5.800 3.400z" fill="#e64a3b"/><path d="M11.700-6.750A13.500 13.500 0 0 1 0 13.500L5.800 3.400 5-6.750z" fill="#fdd13c"/><path d="M0 13.500A13.500 13.500 0 0 1-11.700-6.750L-5.800 3.400 5.800 3.400z" fill="#22a05a"/><circle r="6.300" fill="#fff"/><circle r="5" fill="#4285f4"/></svg></span>
  <span class="t open tab"><i><svg width="24" height="24"><use href="#logo"/></svg></i></span>
  <div class="tray">
    <svg class="bat" width="20" height="12"><path d="M.5.5h16.500v10H.5zM18.500 4v3" fill="none" stroke="#fff"/><path d="M2.500 2.500H9v6H2.500z" fill="#fff"/></svg>
    <svg class="wifi" width="16" height="16" fill="none" stroke="#ddd"><path d="M1 15A14 14 0 0 1 15 1M4.500 15A10.500 10.500 0 0 1 15 4.500M8 15a7 7 0 0 1 7-7"/><circle cx="13.500" cy="13.500" r="1.300" fill="#fff"/></svg>
    <svg class="vol" width="21" height="18" fill="none" stroke="#fff"><path d="M.5 6.500h2.500L7 3v12l-4-3.500H.5zM10 6.500q2 2.500 0 5M13.500 4q4 5 0 10M17 1.500q6 7.500 0 15"/></svg>
    <div class="clock">8:54 AM<br>2/6/2020</div>
    <svg class="note" width="20" height="20" fill="none" stroke="#fff"><path d="M.7.7h18.600v15h-6.600L10 18.500 7.300 15.700H.7z" stroke-width="1.200"/></svg><i class="edge"></i>
  </div>
</div>

<div class="dialog">
  <div class="dtitle">Edit Colors [ProfitMargin]<svg width="14" height="14"><path d="M1 1l12 12M13 1L1 13" stroke="#000"/></svg></div>
  <div class="dbody">
    <div class="plabel">Palette:</div>
    <div class="pal"><div><svg width="27" height="14"><rect x=".5" y=".5" width="26" height="13" fill="url(#div)" stroke="#000"/></svg>Red-Green Diverging</div><svg class="pc" width="10" height="6"><path d="M.5.5L5 5l4.500-4.500" fill="none" stroke="#444"/></svg></div>
    <div class="ramp"><i class="sw red"></i><span><svg width="306" height="26"><rect x=".5" y=".5" width="305" height="24" fill="url(#div)" stroke="#b9a99c"/><path d="M153.500 22v4" stroke="#000"/></svg></span><i class="sw grn"></i></div>
    <div class="rends"><span>-0.500</span><span>0.500</span></div>
    <div class="ck"><i></i>Stepped Color<div class="spin">5<svg width="13" height="18"><path d="M.5.5h12v17H.5zM0 9h13" fill="#f4f4f4" stroke="#ddd"/><path d="M3 7h7L6.500 3zM3 11.500h7l-3.500 4z" fill="#555"/></svg></div><span class="off">Steps</span></div>
    <div class="ck r2"><i></i>Reversed</div>
    <div class="ck r3"><i></i>Use Full Color Range</div>
    <div class="ck r4 off"><i></i>Include Totals<button>&lt;&lt; Advanced</button></div>
    <hr>
    <div class="two"><div class="ck"><i><svg width="12" height="10"><path d="M1 5l3.500 3.500L11 1" fill="none" stroke="#222" stroke-width="1.300"/></svg></i>Start:</div><div class="ck"><i><svg width="12" height="10"><path d="M1 5l3.500 3.500L11 1" fill="none" stroke="#222" stroke-width="1.300"/></svg></i>End:</div></div>
    <div class="two ins"><div class="in">-0.5</div><div class="in">0.5</div></div>
    <div class="ck ctr"><i></i>Center:</div>
    <div class="in dis">0</div>
    <div class="btns"><button class="rs">Reset</button><button class="ok">OK</button><button>Cancel</button><button class="na">Apply</button></div>
  </div>
</div>
</body>
</html>
```
FILE: styles.css
```css
*{box-sizing:border-box}
body{margin:0;width:1920px;height:1080px;overflow:hidden;display:flex;flex-direction:column;background:#f4f4f4;font-family:Roboto,"Open Sans",sans-serif;font-size:16px;color:#111;position:relative}
svg{flex:none}
.defs{position:absolute}
ul,h1,h3{margin:0;padding:0;list-style:none;font-weight:400}
button{font:inherit;padding:0;background:#e1e1e1;border:1px solid #adadad;color:#000}
hr{margin:0;border:0;height:1px;background:#999;flex:1}

.titlebar{height:28px;background:#fff;display:flex;align-items:center;padding-left:3px;color:#8a8a8a;font:14.300px "Open Sans",sans-serif}
.applogo,.taskbar .tab{--a:#1f6fa6;--b:#3b7fa9;--c:#3b7fa9;--d:#3b7fa9;--e:#3b7fa9;--f:#5d9cc4}
.applogo{width:18px;height:18px;background:#f0f0f0;box-shadow:1px 1px 1px #bbb;display:flex;align-items:center;justify-content:center;margin-right:6px}
.winbtns{margin-left:auto;margin-right:20px}
.menubar{height:26px;background:#fff;display:flex;align-items:center;padding:2px 0 0 8px;color:#8f8f8f;font:14.400px "Open Sans",sans-serif}
.menubar span{flex:none;white-space:nowrap}
.m1{width:39px}.m2{width:48px}.m3{width:85px}.m4{width:89px}.m5{width:50px}.m6{width:69px}.m7{width:46px}.m8{width:63px}.m9{width:71px}

.toolbar{height:51px;display:flex;align-items:center;color:#555;padding-bottom:1px}
.tb{display:flex;align-items:center;justify-content:center;flex:none}
.tb svg{fill:none;stroke:#666;stroke-width:1.200}
.dim{color:#bbb}.tb.dim svg{stroke:#b5b5b5}
.color{--a:#e8762c;--b:#eb912c;--c:#5c6692;--d:#c72035;--e:#1f447e;--f:#7199a6}
.cr{width:8px;display:flex;justify-content:center}
.sep{width:1px;height:35px;background:#ccc;flex:none}
.w56{width:56px}.w46{width:46px}.w45{width:45px}.w41{width:41px}.w40{width:40px}.w39{width:39px}.w38{width:38px}.w36{width:36px}
.ml4{margin-left:4px}.ml5{margin-left:5px}.ml6{margin-left:6px}.ml7{margin-left:7px}.ml8{margin-left:8px}.ml11{margin-left:11px}.ml17{margin-left:17px}
.pin{width:37px;height:37px;background:#e6e6e6}
.fit{width:127px;height:28px;margin-left:10px;border:1px solid #d0d0d0;border-radius:2px;display:flex;align-items:center;justify-content:flex-end;padding-right:8px;color:#ccc}
.showme{margin-left:auto;width:122px;display:flex;align-items:center;gap:6px;font-size:17.500px;font-weight:300;color:#000;padding-bottom:2px}

.work{height:862px;display:flex;flex:none}
.datapane{width:262px;border-right:1px solid #ccc;background:#fff;flex:none}
.tabs{height:33px;display:flex;border-top:1px solid #d0d0d0;font-size:18px}
.tabs b{width:97px;padding:4px 0 0 22px;font-weight:500;font-size:18.500px;line-height:22px}
.tabs span{flex:1;border-left:1px solid #ccc;border-bottom:1px solid #ccc;background:#fafafa;display:flex;align-items:center;justify-content:space-between;padding:0 7px 0 15px;font-weight:300;color:#000}
.source{height:37px;border-bottom:1px solid #ddd;display:flex;align-items:center;padding:0 0 2px 23px;gap:6px;color:#222;font-weight:300}
.head{height:32px;padding-left:22px;font-size:18.500px;font-weight:500;display:flex;align-items:center;justify-content:space-between;padding-right:5px}
.measures{border-top:1px solid #ddd;height:31px;margin-top:1px;padding-bottom:2px;padding-left:21.500px}
.fields li{height:26px;display:flex;align-items:center;padding:0 0 0 39px;color:#3b7f9f;white-space:nowrap}
.fields{height:468px}.fields.green{height:auto}
.fields svg{margin-left:5px}
.fields svg[width="12"]{margin-left:4px}
.fields svg:not(.cv){margin-right:auto}
.fields span{width:193px;color:#000;flex:none;font-weight:300}
.fields em{font:500 10.500px Roboto,sans-serif;width:28px;padding-left:2px}
.fields .grp{padding-left:5px}.fields .grp span{width:211px}
.fields .grp svg+svg{margin-left:12px}
.fields .b span{font-weight:500;padding-bottom:1px}
.fields .top{padding-left:21px}.fields .top span{width:211px}
.green .top{color:#3ba182}.fields svg.eq{margin-left:1px}
.it span{font-style:italic}

.cards{width:206px;padding-left:6px;flex:none}
.card{width:194px;border:1px solid #d0d0d0;background:#fafafa;color:#444;position:relative}
.card h3{font-size:16px;padding:8px 0 0 7px;line-height:20px;color:#222;font-weight:300}
.pages{height:70px}.filters{height:92px;margin-top:6px}.marks{height:329px;margin-top:5px}
.pill{display:block;width:178px;height:24px;border-radius:12px;background:#00b180;color:#fff;font-size:16px;line-height:25px;padding-left:13px;white-space:nowrap}
.blue{background:#4996b2;width:182px;margin:10px 0 0 5px}
.marktype{margin:15px 0 0 7px;width:178px;height:24px;border:1px solid #c8c8c8;display:flex;align-items:center;font-size:15px;color:#333;font-weight:300;padding-left:13px}
.marktype span{flex:1;padding-left:7px}.marktype i{width:22px;height:22px;border-left:1px solid #ccc;display:flex;align-items:center;justify-content:center}
.markbtns{display:flex;justify-content:space-between;margin:7px 0 0 7px;width:178px}
.markbtns span{width:54px;height:52px;border:1px solid #d0d0d0;display:flex;flex-direction:column;align-items:center;justify-content:space-between;padding:8px 0 1px;font-size:14.500px;line-height:17px;color:#111;font-weight:300}
.popup{position:absolute;left:7px;top:128px;width:189px;height:197px;background:#fff;border:1px solid #555;font:12.300px "Noto Sans",sans-serif;color:#000;padding:5px 7px}
.grptitle{height:20px;display:flex;align-items:center;gap:7px}
.editcolors{display:block;margin:7px 0 0 16px;width:141px;height:28px;background:#ddd;border-color:#999}
.op{margin-top:1px}
.oprow{display:flex;margin:2px 0 0 21px;height:23px;align-items:flex-start;gap:10px;padding-top:4px}
.pct{width:40px;height:22px;border:1px solid #777;text-align:center;line-height:20px;margin-top:-4px}
.ef{margin-top:7px}
.effrow{display:flex;justify-content:space-between;margin:3px 16px 5px 16px;height:22px;align-items:center}
.combo{width:94px;height:22px;border:1px solid #777;display:flex;align-items:center;justify-content:space-between;padding:0 4px 0 3px}
.combo b{width:64px;height:2px;background:#000;margin-left:3px}

.stage{width:1446px}
.shelf{height:32px;border:1px solid #d0d0d0;background:#fafafa;margin-bottom:6px;display:flex;align-items:center}
.sl{width:159px;height:100%;border-right:1px solid #d0d0d0;display:flex;align-items:center;padding-left:8px;gap:8px;color:#222;font-weight:300;margin-right:2px}
.lower{display:flex;justify-content:space-between}
.view{width:1246px;height:780px;background:#fff;border:1px solid #d0d0d0;padding-left:6px}
.view h1{height:51px;padding:13px 0 0 5px;font-size:26.500px;font-weight:300;line-height:32px;color:#333}
.map{display:block;outline:1px solid #e3e3e3;outline-offset:-1px}
.land{fill:#e7e7e7;stroke:#f1f1f1;stroke-width:2}.land path,.halo path,.reg path{vector-effect:non-scaling-stroke}
.lakes{fill:#fff}
.reg{fill:none;stroke:#a6a6a6;stroke-width:.9}
.halo{fill:none;stroke:#888;stroke-width:1.300;filter:drop-shadow(0 0 1px #fff) drop-shadow(0 0 1.500px #fff) drop-shadow(0 0 1.500px #fff)}
.names{font:15px "Open Sans",sans-serif;fill:#8c8c8c;paint-order:stroke;stroke:#ececec;stroke-width:2px}
.names .lg{font-size:17px}
.marksg{stroke-width:1.300}
.attr{font:13.500px "Liberation Sans",sans-serif;fill:#808080}
.legends{width:194px}
.leg{border:1px solid #d0d0d0;background:#fff;position:relative}
.leg h3{height:36px;background:#fafafa;padding:0 0 0 7px;line-height:35px;color:#222;font-size:16px;font-weight:300;letter-spacing:.1px}
.l1{height:97px}.l2{height:164px;margin-top:6px}.l3{height:81px;margin-top:6px}
.yr{margin:3px 3px 0;height:25px;border:1px solid #888;font:15px/25px Lato,sans-serif;padding-left:3px;color:#444}
.slide{display:flex;margin:5px 0 0 6px;gap:4px}.slide i{width:16px;height:16px;border:1px solid #ccc;display:flex;align-items:center;justify-content:center}.slide svg:first-child{margin-right:1px}
.slide i svg:first-child{fill:none;stroke:#3c4a63;stroke-width:2.500;margin:0}
.l2{display:flex;flex-wrap:wrap}.l2 h3{width:100%}
.bubbles{margin-left:3px;stroke-width:1.300}
.nums{width:52px;text-align:right;font-size:16px;color:#222;font-weight:300;line-height:21px;margin-top:-1px}.nums span{display:block}
.grad{display:block;margin:4px 0 0 4px}.ends{display:flex;justify-content:space-between;margin:1px 5px 0 4px;color:#222;font-weight:300;line-height:20px}

.sheettabs{height:37px;background:#e6e6e6;border-top:1px solid #ccc;border-bottom:1px solid #d2d2d2;display:flex;color:#666;flex:none}
.ds{width:162px;display:flex;align-items:center;padding:2px 0 0 11px;gap:6px;font-size:16px;font-weight:300;color:#444}
.sheettabs b{width:70px;background:#fafafa;border:solid #ccc;border-width:0 1px;text-align:center;line-height:35px;font-weight:500;color:#555}
.nt{width:32px;border-right:1px solid #ccc;display:flex;align-items:center;justify-content:center;padding:2px 0 0 2px}.nt svg{fill:none;stroke:#666}
.status{height:26px;background:#ebebeb;display:flex;align-items:center;padding-left:3px;font-size:14px;color:#111;font-weight:300;flex:none}
.s1{width:83px}.s2{width:126px}
.user{margin-left:auto;width:157px;height:26px;border-left:1px solid #ccc;display:flex;align-items:center;padding-left:6px;gap:9px}.uc{margin-left:auto;margin-right:10px}
.status i,.nav,.views{height:26px;border-left:1px solid #ccc}.c32{width:32px}.c57{width:57px}.nav{width:71px;padding:9px 0 0 8px}.views{width:70px;padding:7px 0 0 8px}
.nav svg,.views svg{display:block}

.taskbar{height:50px;background:#080708;display:flex;position:relative;color:#fff;flex:none}
.wall{position:absolute;left:0;top:0}.wall text{font:italic 30px "Open Sans",sans-serif;fill:none;stroke:#4c4a4c}
.t{display:flex;align-items:center;justify-content:center;position:relative;height:50px;flex:none}
.win{width:60px}.tv{width:60px;margin-right:9px}
.open{border-bottom:3px solid #76b9ed;padding:3px 2px 0 0;width:51px}.ch{margin-left:11px}.tab{margin-left:6px;width:61px;background:#444;padding:1px 3px 0 0}
.tab i{width:28px;height:28px;background:#f8f8f8;display:flex;align-items:center;justify-content:center}
.tray{margin-left:auto;display:flex;align-items:center;position:relative;height:50px}
.bat{margin-right:12px}.wifi{margin-right:11px}.vol{margin-right:15px}
.clock{width:62px;text-align:center;font:14.500px/23px "Open Sans",sans-serif;margin-right:27px;letter-spacing:-.2px}
.note{margin-right:25px}.edge{width:1px;height:50px;background:#555;margin-right:5px}

.dialog{position:absolute;left:746px;top:286px;width:428px;height:450px;border:1px solid #1883d7;background:#f0f0f0;box-shadow:0 6px 18px rgba(0,0,0,.4);font:12.300px "Noto Sans",sans-serif;color:#000}
.dtitle{height:37px;background:#fff;display:flex;align-items:center;justify-content:space-between;padding:0 14px 1px 9px;font:14.300px "Open Sans",sans-serif}
.dbody{padding:13px 13px 0}
.plabel{height:17px;line-height:17px}
.pal{margin-top:6px;width:400px;height:22px;border:1px solid #777;background:#fff;display:flex;align-items:center;justify-content:space-between;padding:0 4px 0 2px}
.pal div{width:378px;height:16px;background:#3399ff;color:#fff;display:flex;align-items:center;gap:5px;padding-left:2px}
.ramp{display:flex;justify-content:space-between;align-items:center;margin:7px 1px 0 2px;height:33px;width:396px}
.ramp span{width:314px;height:33px;background:#fff;padding:4px}.ramp svg{display:block}
.sw{width:32px;height:29px;border:1px solid #000}.red{background:#ae123a}.grn{background:#24693d}
.rends{display:flex;justify-content:space-between;margin:7px 43px 0;height:17px;line-height:17px}
.ck{display:flex;align-items:center;height:16px}
.ck>i{width:16px;height:16px;border:1px solid #333;background:#fff;margin-right:6px;display:flex;align-items:center;justify-content:center}
.rends+.ck{margin-top:9px}
.spin{width:49px;height:22px;border:1px solid #ccc;margin:0 7px 0 11px;display:flex;justify-content:space-between;align-items:center;color:#838383;padding:0 1px 0 3px}
.off{color:#838383}.off>i{border-color:#ccc}
.r2{margin-top:12px}.r3{margin-top:11px}.r4{margin-top:11px}
.ck button{width:91px;height:26px;margin:-8px 1px 0 auto;flex:none}
.dbody hr{margin-top:9px}
.two{display:flex;margin-top:11px;gap:7px}.two>div{width:137px}
.ins{margin-top:9px}.in{height:27px;width:137px;border:1px solid #777;background:#fff;line-height:27px;padding-left:2px}
.ctr{margin-top:9px}.dis{margin-top:9px;background:#f0f0f0;border-color:#ccc;color:#838383}
.btns{display:flex;margin:8px 0 0 1px;gap:9px}.btns button{width:91px;height:26px}.btns .rs{margin-right:7px}.btns .ok{border:2px solid #0078d7}.btns .na{background:#ccc;border-color:#bfbfbf;color:#838383}
```
